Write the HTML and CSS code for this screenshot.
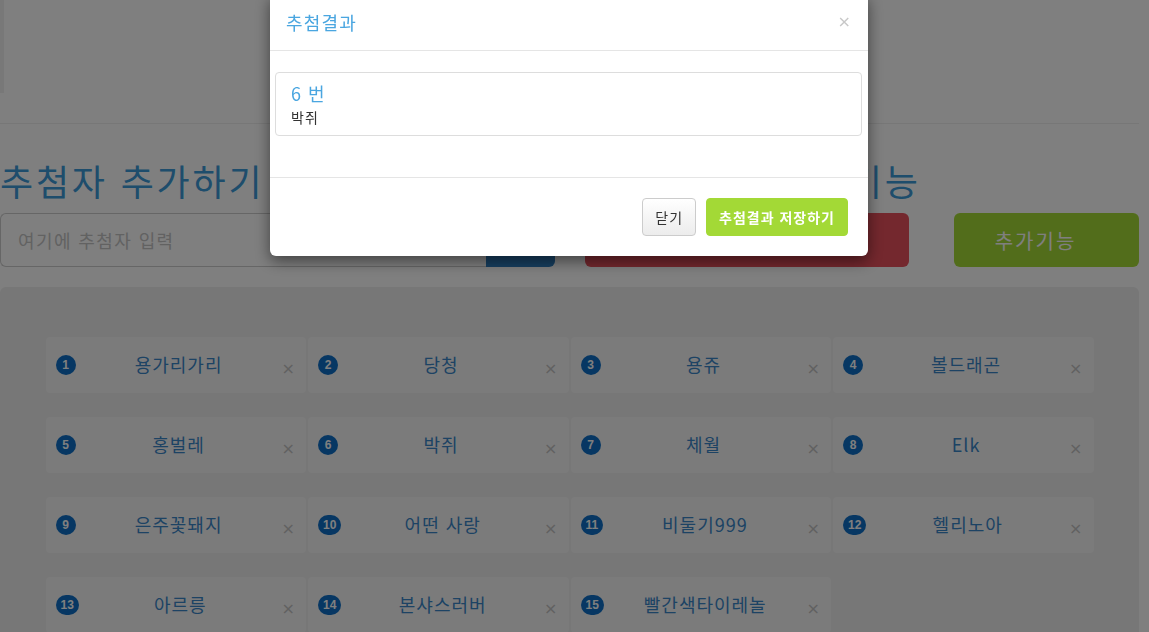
FILE: index.html
```html
<!DOCTYPE html>
<html lang="ko">
<head>
<meta charset="utf-8">
<title>추첨</title>
<link rel="stylesheet" href="styles.css">
</head>
<body>
<div class="page">
  <div class="top-strip"></div>
  <hr class="divider">
  <div class="cols">
    <section class="col">
      <h1 class="heading">추첨자 추가하기</h1>
      <div class="input-group">
        <input class="name-input" type="text" placeholder="여기에 추첨자 입력">
        <button class="btn-add">추가</button>
      </div>
    </section>
    <section class="col">
      <h1 class="heading">추첨하기와 추가기능</h1>
      <div class="action-row">
        <button class="btn-draw">추첨하기</button>
        <button class="btn-extra">추가기능</button>
      </div>
    </section>
  </div>
  <div class="well">
    <div class="tiles">
      <div class="tile"><span class="badge">1</span><span class="name">용가리가리</span><span class="remove">×</span></div>
      <div class="tile"><span class="badge">2</span><span class="name">당청</span><span class="remove">×</span></div>
      <div class="tile"><span class="badge">3</span><span class="name">용쥬</span><span class="remove">×</span></div>
      <div class="tile"><span class="badge">4</span><span class="name">볼드래곤</span><span class="remove">×</span></div>
      <div class="tile"><span class="badge">5</span><span class="name">홍벌레</span><span class="remove">×</span></div>
      <div class="tile"><span class="badge">6</span><span class="name">박쥐</span><span class="remove">×</span></div>
      <div class="tile"><span class="badge">7</span><span class="name">체월</span><span class="remove">×</span></div>
      <div class="tile"><span class="badge">8</span><span class="name">Elk</span><span class="remove">×</span></div>
      <div class="tile"><span class="badge">9</span><span class="name">은주꽃돼지</span><span class="remove">×</span></div>
      <div class="tile"><span class="badge">10</span><span class="name">어떤 사랑</span><span class="remove">×</span></div>
      <div class="tile"><span class="badge">11</span><span class="name">비둘기999</span><span class="remove">×</span></div>
      <div class="tile"><span class="badge">12</span><span class="name">헬리노아</span><span class="remove">×</span></div>
      <div class="tile"><span class="badge">13</span><span class="name">아르릉</span><span class="remove">×</span></div>
      <div class="tile"><span class="badge">14</span><span class="name">본샤스러버</span><span class="remove">×</span></div>
      <div class="tile"><span class="badge">15</span><span class="name">빨간색타이레놀</span><span class="remove">×</span></div>
    </div>
  </div>
</div>

<div class="backdrop"></div>
<div class="modal-wrap">
  <div class="modal">
    <div class="modal-header">
      <h4 class="modal-title">추첨결과</h4>
      <span class="modal-close">×</span>
    </div>
    <div class="modal-body">
      <div class="result-panel">
        <div class="result-num">6 번</div>
        <div class="result-name">박쥐</div>
      </div>
    </div>
    <div class="modal-footer">
      <button class="btn-close">닫기</button>
      <button class="btn-save">추첨결과 저장하기</button>
    </div>
  </div>
</div>
</body>
</html>
```
FILE: styles.css
```css
html, body {
  margin: 0;
  padding: 0;
  overflow: hidden;
  height: 100%;
}
body {
  background: #ffffff;
  font-family: "Noto Sans CJK KR", "Noto Sans", sans-serif;
  color: #333;
}
.page {
  width: 1139px;
}
.top-strip {
  width: 4px;
  height: 93px;
  background: #f0f0f0;
}
.divider {
  margin: 30px 0 36px;
  border: 0;
  border-top: 1px solid #eeeeee;
  height: 0;
}
.cols {
  display: grid;
  grid-template-columns: 554.5px 554.5px;
  column-gap: 30px;
}
.heading {
  margin: 0 0 13px;
  font-size: 36px;
  font-weight: 400;
  line-height: 40px;
  letter-spacing: 2.8px;
  color: #3d9ad8;
  white-space: nowrap;
}
.input-group {
  display: flex;
  height: 54px;
}
.name-input {
  flex: 1;
  min-width: 0;
  box-sizing: border-box;
  height: 54px;
  margin: 0;
  padding: 0 17px;
  border: 1px solid #cccccc;
  border-right: 0;
  border-radius: 6px 0 0 6px;
  font-family: inherit;
  font-size: 18px;
  letter-spacing: 1.4px;
  color: #555;
  background: #fff;
  outline: none;
}
.name-input::placeholder {
  color: #c4c4c4;
}
.btn-add {
  width: 69px;
  height: 54px;
  border: 0;
  border-radius: 0 6px 6px 0;
  background: #2e7ec0;
  color: #fff;
  font-family: inherit;
  font-size: 18px;
}
.action-row {
  display: grid;
  grid-template-columns: 324px 185px;
  justify-content: space-between;
}
.btn-draw, .btn-extra {
  height: 54px;
  border: 0;
  border-radius: 6px;
  color: #fff;
  font-family: inherit;
  font-size: 20px;
  letter-spacing: 2px;
}
.btn-draw { background: #e8505c; }
.btn-extra {
  background: #a5da36;
  padding: 0 22px 0 0;
}

.well {
  margin-top: 20px;
  background: #eeeeee;
  border-radius: 6px;
  padding: 50px 0 40px;
  height: 400px;
}
.tiles {
  width: 1048px;
  margin: 0 auto;
  display: grid;
  grid-template-columns: repeat(4, 1fr);
  column-gap: 2px;
  row-gap: 24px;
}
.tile {
  height: 56px;
  box-sizing: border-box;
  background: #f7f7f7;
  border-radius: 4px;
  display: flex;
  align-items: center;
  padding: 0 11px 0 10px;
}
.badge {
  box-sizing: border-box;
  min-width: 20px;
  height: 20px;
  padding: 0 5px;
  border-radius: 10px;
  background: #0e6fc6;
  color: #fff;
  font-family: "Liberation Sans", sans-serif;
  font-weight: 700;
  font-size: 12px;
  line-height: 20px;
  text-align: center;
}
.name {
  flex: 1;
  margin-top: -3px;
  text-align: center;
  font-size: 18px;
  line-height: 24px;
  letter-spacing: 1px;
  color: #3a86c8;
  white-space: nowrap;
}
.remove {
  margin-top: 7px;
  font-family: "DejaVu Sans", sans-serif;
  font-size: 16px;
  line-height: 1;
  color: #c2c2c2;
}

.backdrop {
  position: fixed;
  inset: 0;
  background: rgba(0, 0, 0, 0.5);
}
.modal-wrap {
  position: fixed;
  top: -6px;
  left: 0;
  width: 1138px;
  display: flex;
  justify-content: center;
}
.modal {
  width: 598px;
  background: #fff;
  border-radius: 6px;
  box-shadow: 0 5px 15px rgba(0, 0, 0, 0.5);
}
.modal-header {
  display: flex;
  align-items: center;
  justify-content: space-between;
  padding: 15px 17px 15px 16px;
  border-bottom: 1px solid #e5e5e5;
}
.modal-title {
  margin: 0;
  font-size: 18px;
  font-weight: 400;
  line-height: 26px;
  letter-spacing: 1.2px;
  color: #4aa6e0;
}
.modal-close {
  font-family: "DejaVu Sans", sans-serif;
  font-size: 16px;
  line-height: 1;
  color: #c8c8c8;
}
.modal-body {
  padding: 21px 6px 41px 5px;
}
.result-panel {
  border: 1px solid #dddddd;
  border-radius: 4px;
  padding: 8px 15px 8px;
}
.result-num {
  font-size: 18px;
  line-height: 24px;
  letter-spacing: 1px;
  color: #4aa6e0;
}
.result-name {
  margin-top: 2px;
  font-size: 14px;
  line-height: 20px;
  letter-spacing: 1px;
  color: #333;
}
.modal-footer {
  display: flex;
  justify-content: flex-end;
  gap: 10px;
  padding: 20px;
  border-top: 1px solid #e5e5e5;
}
.btn-close, .btn-save {
  height: 38px;
  box-sizing: border-box;
  padding: 0 12px;
  font-family: inherit;
  font-size: 14px;
  line-height: 20px;
  letter-spacing: 1px;
  border-radius: 4px;
}
.btn-close {
  border: 1px solid #cccccc;
  background: linear-gradient(#ffffff, #ececec);
  color: #333;
}
.btn-save {
  border: 1px solid #a3d936;
  background: #a3d936;
  color: #fff;
  font-weight: 700;
}
```
